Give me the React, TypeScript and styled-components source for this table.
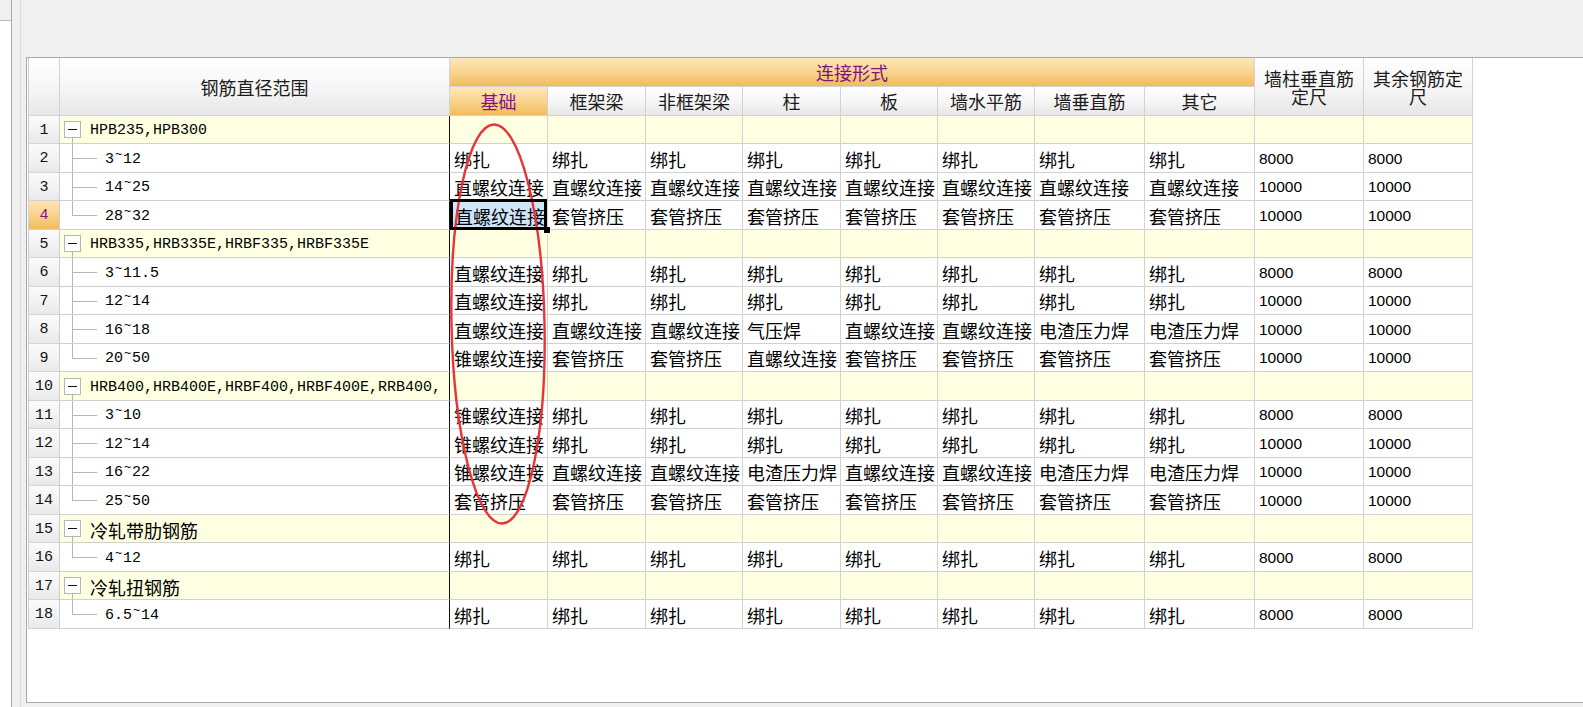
import React from 'react';
import styled, { createGlobalStyle, css } from 'styled-components';

const GlobalStyle = createGlobalStyle`
  html, body {
    margin: 0;
    padding: 0;
    width: 1583px;
    height: 707px;
    overflow: hidden;
    background: #f0f0f0;
  }
  body { font-family: "Noto Sans CJK SC", sans-serif; }
  #root { width: 1583px; height: 707px; }
`;

const Window = styled.div`
  display: flex;
  width: 1583px;
  height: 707px;
`;

const LeftPane = styled.div`
  width: 11px;
  flex: none;
  display: flex;
  flex-direction: column;
  background: #ffffff;
  border-right: 1px solid #a9a9a9;
`;

const LeftPaneHead = styled.div`
  height: 20px;
  background: #f0f0f0;
  border-bottom: 1px solid #b9b9b9;
`;

const Gutter = styled.div`
  width: 14px;
  flex: none;
  display: flex;
`;

const GutterLine = styled.div`
  margin-left: 8px;
  width: 1px;
  background: #d9d9d9;
`;

const Main = styled.div`
  flex: 1;
  min-width: 0;
  display: flex;
  flex-direction: column;
`;

const TopArea = styled.div`
  height: 57px;
  flex: none;
`;

const Panel = styled.div`
  box-sizing: border-box;
  height: 646px;
  flex: none;
  position: relative;
  background: #ffffff;
  border: 1px solid #a9a9a9;
  border-right: none;
  padding-left: 1px;
  overflow: hidden;
`;

const Grid = styled.div`
  display: grid;
  grid-template-columns: 31px 390px 98px 98px 97px 98px 97px 97px 110px 110px 109px 109px;
  grid-template-rows: 29px 29px repeat(9, 28px 29px);
  width: max-content;
  border-left: 1px solid #d0d0d0;
`;

const HeadCell = styled.div<{ $c: number; $r: number; $cs?: number; $rs?: number; $orange?: boolean }>`
  grid-column: ${(p) => p.$c} / span ${(p) => p.$cs ?? 1};
  grid-row: ${(p) => p.$r} / span ${(p) => p.$rs ?? 1};
  box-sizing: border-box;
  display: flex;
  align-items: center;
  justify-content: center;
  text-align: center;
  padding: 0 4px;
  border-right: 1px solid #d3d3d3;
  border-bottom: 1px solid #d3d3d3;
  background: ${(p) =>
    p.$orange
      ? 'linear-gradient(#fde7bb 0%, #f9d48e 50%, #f2bb5c 100%)'
      : 'linear-gradient(#ffffff 0%, #f5f5f5 55%, #e7e7e7 100%)'};
  color: ${(p) => (p.$orange ? '#7e157e' : '#1c1c1c')};
  font-family: "Noto Sans CJK SC", sans-serif;
  font-size: 18px;
  line-height: 18px;
`;

const RowNum = styled.div<{ $active?: boolean }>`
  box-sizing: border-box;
  display: flex;
  align-items: center;
  justify-content: center;
  padding-top: 1px;
  border-right: 1px solid #cdcdcd;
  border-bottom: 1px solid #d3d3d3;
  background: ${(p) =>
    p.$active
      ? 'linear-gradient(#fde5b6 0%, #f9d28a 50%, #f2bc5e 100%)'
      : 'linear-gradient(#fbfbfb 0%, #f1f1f1 60%, #e9e9e9 100%)'};
  color: ${(p) => (p.$active ? '#7e157e' : '#111111')};
  font-family: "Liberation Mono", monospace;
  font-size: 15px;
`;

const NameCell = styled.div<{ $group?: boolean }>`
  box-sizing: border-box;
  display: flex;
  align-items: center;
  border-right: 1px solid #111111;
  border-bottom: 1px solid #d0d0d0;
  background: ${(p) => (p.$group ? '#ffffe1' : '#ffffff')};
  font-family: "Liberation Mono", "Noto Sans CJK SC", monospace;
  font-size: 15px;
  color: #000000;
  white-space: nowrap;
  overflow: hidden;
`;

const Expander = styled.span`
  box-sizing: border-box;
  position: relative;
  flex: none;
  width: 17px;
  height: 17px;
  margin-left: 4px;
  margin-right: 9px;
  border: 1px solid #b6b6b6;
  background: #ffffff;
  display: flex;
  align-items: center;
  justify-content: center;
  &::before {
    content: '';
    width: 9px;
    height: 1px;
    background: #111111;
  }
  &::after {
    content: '';
    position: absolute;
    left: 7px;
    top: 16px;
    width: 1px;
    height: 14px;
    background: #b6b6b6;
  }
`;

const Branch = styled.span<{ $last?: boolean }>`
  position: relative;
  flex: none;
  align-self: stretch;
  width: 45px;
  &::before {
    content: '';
    position: absolute;
    left: 12px;
    top: 0;
    width: 1px;
    height: ${(p) => (p.$last ? '50%' : '100%')};
    background: #b6b6b6;
  }
  &::after {
    content: '';
    position: absolute;
    left: 12px;
    top: 50%;
    width: 25px;
    height: 1px;
    background: #b6b6b6;
  }
`;

const Label = styled.span<{ $cjk?: boolean }>`
  padding-top: 2px;
  font-family: ${(p) => (p.$cjk ? '"Noto Sans CJK SC", sans-serif' : '"Liberation Mono", monospace')};
  font-size: ${(p) => (p.$cjk ? '18px' : '15px')};
`;

const Tilde = styled.span`
  display: inline-block;
  width: 9px;
  text-align: center;
  font-size: 12px;
  transform: translateY(-5px);
`;

const DataCell = styled.div<{ $group?: boolean; $num?: boolean; $selected?: boolean }>`
  box-sizing: border-box;
  display: flex;
  align-items: center;
  min-width: 0;
  padding: 1px 0 0 4px;
  border-right: 1px solid #d3d3d3;
  border-bottom: 1px solid #d0d0d0;
  background: ${(p) => (p.$selected ? '#cfe5f8' : p.$group ? '#ffffe1' : '#ffffff')};
  color: #000000;
  font-family: ${(p) => (p.$num ? '"Liberation Sans", Arial, sans-serif' : '"Noto Sans CJK SC", sans-serif')};
  font-size: ${(p) => (p.$num ? '15.5px' : '18px')};
  ${(p) =>
    p.$selected &&
    css`
      position: relative;
      padding-left: 5px;
      &::after {
        content: '';
        position: absolute;
        left: 0;
        top: -2px;
        right: 0;
        bottom: -1px;
        border: 3px solid #000000;
        pointer-events: none;
        z-index: 2;
      }
      &::before {
        content: '';
        position: absolute;
        right: -3px;
        bottom: -4px;
        width: 6px;
        height: 6px;
        background: #000000;
        z-index: 3;
      }
    `}
`;

const CellText = styled.span`
  display: block;
  width: 100%;
  overflow: hidden;
  white-space: nowrap;
`;

const Annotation = styled.svg`
  position: absolute;
  left: 413px;
  top: 52px;
  width: 120px;
  height: 430px;
  pointer-events: none;
  overflow: visible;
`;

const B = '绑扎';
const Z = '直螺纹连接';
const T = '套管挤压';
const K = '锥螺纹连接';
const Q = '气压焊';
const D = '电渣压力焊';

type GroupRow = { kind: 'group'; label: string };
type ItemRow = { kind: 'item'; label: string; cells: string[]; a: string; b: string; last?: boolean };
type Row = GroupRow | ItemRow;

const fill = (v: string, n: number) => Array.from({ length: n }, () => v);

const rows: Row[] = [
  { kind: 'group', label: 'HPB235,HPB300' },
  { kind: 'item', label: '3~12', cells: fill(B, 8), a: '8000', b: '8000' },
  { kind: 'item', label: '14~25', cells: fill(Z, 8), a: '10000', b: '10000' },
  { kind: 'item', label: '28~32', cells: [Z, ...fill(T, 7)], a: '10000', b: '10000', last: true },
  { kind: 'group', label: 'HRB335,HRB335E,HRBF335,HRBF335E' },
  { kind: 'item', label: '3~11.5', cells: [Z, ...fill(B, 7)], a: '8000', b: '8000' },
  { kind: 'item', label: '12~14', cells: [Z, ...fill(B, 7)], a: '10000', b: '10000' },
  { kind: 'item', label: '16~18', cells: [Z, Z, Z, Q, Z, Z, D, D], a: '10000', b: '10000' },
  { kind: 'item', label: '20~50', cells: [K, T, T, Z, T, T, T, T], a: '10000', b: '10000', last: true },
  { kind: 'group', label: 'HRB400,HRB400E,HRBF400,HRBF400E,RRB400,' },
  { kind: 'item', label: '3~10', cells: [K, ...fill(B, 7)], a: '8000', b: '8000' },
  { kind: 'item', label: '12~14', cells: [K, ...fill(B, 7)], a: '10000', b: '10000' },
  { kind: 'item', label: '16~22', cells: [K, Z, Z, D, Z, Z, D, D], a: '10000', b: '10000' },
  { kind: 'item', label: '25~50', cells: fill(T, 8), a: '10000', b: '10000', last: true },
  { kind: 'group', label: '冷轧带肋钢筋' },
  { kind: 'item', label: '4~12', cells: fill(B, 8), a: '8000', b: '8000', last: true },
  { kind: 'group', label: '冷轧扭钢筋' },
  { kind: 'item', label: '6.5~14', cells: fill(B, 8), a: '8000', b: '8000', last: true },
];

const kinds = ['基础', '框架梁', '非框架梁', '柱', '板', '墙水平筋', '墙垂直筋', '其它'];

const hasCjk = (s: string) => /[\u4e00-\u9fff]/.test(s);

const renderRange = (label: string) => {
  const parts = label.split('~');
  if (parts.length !== 2) return label;
  return (
    <>
      {parts[0]}
      <Tilde>~</Tilde>
      {parts[1]}
    </>
  );
};

const ACTIVE_ROW = 3;

export default function App() {
  return (
    <>
      <GlobalStyle />
      <Window>
        <LeftPane>
          <LeftPaneHead />
        </LeftPane>
        <Gutter>
          <GutterLine />
        </Gutter>
        <Main>
          <TopArea />
          <Panel>
            <Grid>
              <HeadCell $c={1} $r={1} $rs={2} />
              <HeadCell $c={2} $r={1} $rs={2}>钢筋直径范围</HeadCell>
              <HeadCell $c={3} $r={1} $cs={8} $orange>连接形式</HeadCell>
              <HeadCell $c={11} $r={1} $rs={2}>墙柱垂直筋定尺</HeadCell>
              <HeadCell $c={12} $r={1} $rs={2}>其余钢筋定尺</HeadCell>
              {kinds.map((k, i) => (
                <HeadCell key={k} $c={3 + i} $r={2} $orange={i === 0}>
                  {k}
                </HeadCell>
              ))}
              {rows.map((row, ri) => {
                const isGroup = row.kind === 'group';
                const cells = isGroup ? fill('', 10) : [...row.cells, row.a, row.b];
                return (
                  <React.Fragment key={ri}>
                    <RowNum $active={ri === ACTIVE_ROW}>{ri + 1}</RowNum>
                    <NameCell $group={isGroup}>
                      {isGroup ? <Expander /> : <Branch $last={row.last} />}
                      <Label $cjk={hasCjk(row.label)}>
                        {isGroup ? row.label : renderRange(row.label)}
                      </Label>
                    </NameCell>
                    {cells.map((c, ci) => (
                      <DataCell
                        key={ci}
                        $group={isGroup}
                        $num={ci >= 8}
                        $selected={ri === ACTIVE_ROW && ci === 0}
                      >
                        <CellText>{c}</CellText>
                      </DataCell>
                    ))}
                  </React.Fragment>
                );
              })}
            </Grid>
            <Annotation viewBox="0 0 120 430">
              <ellipse
                cx="58"
                cy="214"
                rx="46.5"
                ry="199.5"
                fill="none"
                stroke="#e8333a"
                strokeWidth="2.4"
                transform="rotate(-1.2 58 214)"
              />
            </Annotation>
          </Panel>
        </Main>
      </Window>
    </>
  );
}
